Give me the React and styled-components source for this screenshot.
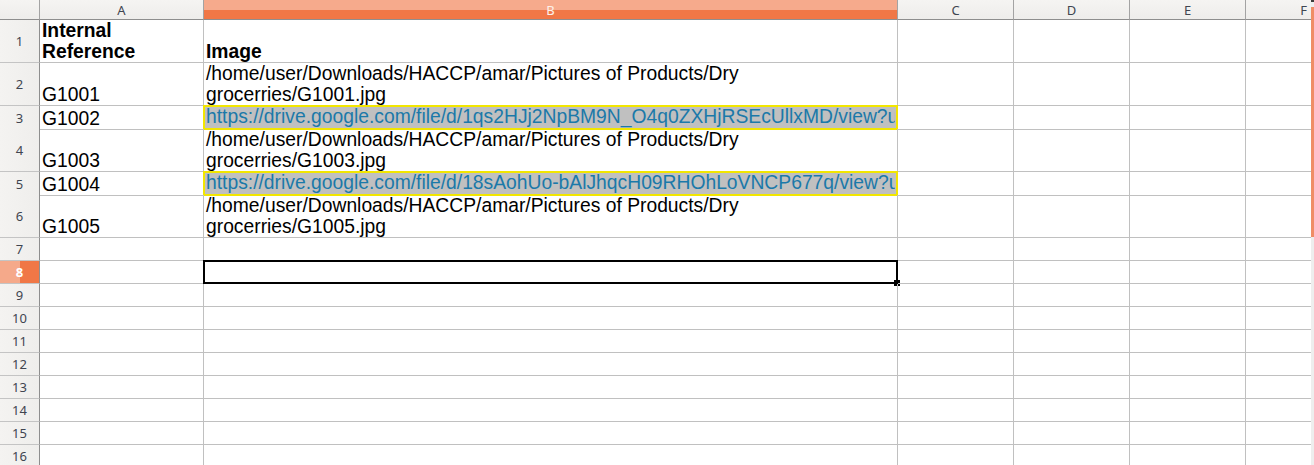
import React from "react";
import styled, { createGlobalStyle } from "styled-components";

const COLS = "40px 164px 694px 116px 116px 116px 116px";
const LETTERS = ["A", "B", "C", "D", "E", "F"];

const rows = [
  { h: 43, a: "Internal\nReference", b: "Image", bold: true },
  { h: 43, a: "G1001", b: "/home/user/Downloads/HACCP/amar/Pictures of Products/Dry\ngrocerries/G1001.jpg" },
  { h: 23, a: "G1002", b: "https://drive.google.com/file/d/1qs2HJj2NpBM9N_O4q0ZXHjRSEcUllxMD/view?usp=sharing", link: true },
  { h: 43, a: "G1003", b: "/home/user/Downloads/HACCP/amar/Pictures of Products/Dry\ngrocerries/G1003.jpg" },
  { h: 23, a: "G1004", b: "https://drive.google.com/file/d/18sAohUo-bAlJhqcH09RHOhLoVNCP677q/view?usp=sharing", link: true },
  { h: 43, a: "G1005", b: "/home/user/Downloads/HACCP/amar/Pictures of Products/Dry\ngrocerries/G1005.jpg" },
  { h: 23 },
  { h: 23, selected: true },
  ...Array.from({ length: 8 }, () => ({ h: 23 })),
];

const GlobalStyle = createGlobalStyle`
  html, body {
    margin: 0;
    padding: 0;
    background: #ffffff;
    overflow: hidden;
  }
`;

const Page = styled.div`
  display: flex;
  width: 1314px;
  height: 465px;
  overflow: hidden;
`;

const Sheet = styled.div`
  width: 1311px;
  overflow: hidden;
  font-family: "Liberation Sans", Arial, sans-serif;
`;

const Row = styled.div`
  display: grid;
  grid-template-columns: ${COLS};
  height: ${(p) => p.$h}px;
`;

const ColHead = styled.div`
  box-sizing: border-box;
  display: flex;
  align-items: center;
  justify-content: center;
  font-family: "Noto Sans", "DejaVu Sans", sans-serif;
  font-size: 13px;
  border-right: 1px solid #a3a3a3;
  border-bottom: 1px solid #8e8e8e;
  background: ${(p) =>
    p.$active
      ? "linear-gradient(#f6aa8c 0, #f6aa8c 10px, #f07746 10px, #f07746 100%)"
      : "linear-gradient(#f5f4f2, #eeedeb)"};
  color: ${(p) => (p.$active ? "#fdf1ea" : "#3f4550")};
`;

const RowHead = styled.div`
  box-sizing: border-box;
  display: flex;
  align-items: center;
  justify-content: center;
  font-family: "Noto Sans", "DejaVu Sans", sans-serif;
  font-size: 13px;
  border-right: 1px solid #8e8e8e;
  border-bottom: 1px solid #c4c4c4;
  background: ${(p) =>
    p.$active
      ? "linear-gradient(90deg, #f5a98a 0, #f5a98a 20px, #f07746 20px, #f07746 100%)"
      : "linear-gradient(90deg, #f4f3f1, #efeeec)"};
  color: ${(p) => (p.$active ? "#ffffff" : "#3f4550")};
  font-weight: ${(p) => (p.$active ? 700 : 400)};
`;

const Cell = styled.div`
  position: relative;
  box-sizing: border-box;
  display: flex;
  align-items: flex-end;
  padding: 0 2px ${(p) => (p.$link ? "2px" : "0")} 2px;
  border-right: 1px solid #c0c0c0;
  border-bottom: 1px solid #c0c0c0;
  font-size: 19.3px;
  line-height: 21px;
  white-space: pre;
  overflow: ${(p) => (p.$selected || p.$link ? "visible" : "hidden")};
  font-weight: ${(p) => (p.$bold ? 700 : 400)};
  color: ${(p) => (p.$link ? "#1b79a9" : "#000000")};
  background: ${(p) => (p.$link ? "#c0c0c0" : "transparent")};
`;

const Clip = styled.span`
  display: block;
  width: 100%;
  overflow-x: clip;
  overflow-y: visible;
`;

const LinkFrame = styled.div`
  position: absolute;
  top: -1px;
  left: -1px;
  right: -1px;
  bottom: -1px;
  border: 2px solid #f2e600;
  pointer-events: none;
`;

const Cursor = styled.div`
  position: absolute;
  top: -1px;
  left: -1px;
  right: -1px;
  bottom: -1px;
  border: 2px solid #000000;
  pointer-events: none;

  &::after {
    content: "";
    position: absolute;
    right: -4px;
    bottom: -4px;
    width: 6px;
    height: 6px;
    background: #000000;
  }
`;

const Scrollbar = styled.div`
  width: 3px;
  display: flex;
  flex-direction: column;
  background: #eeeeee;
`;

const ScrollCap = styled.div`
  height: 2px;
  background: #3c3c3c;
`;

const ScrollThumb = styled.div`
  margin-top: 5px;
  height: 230px;
  background: #ef8d66;
`;

export default function App() {
  return (
    <Page>
      <GlobalStyle />
      <Sheet>
        <Row $h={20}>
          <ColHead />
          {LETTERS.map((l) => (
            <ColHead key={l} $active={l === "B"}>
              {l}
            </ColHead>
          ))}
        </Row>
        {rows.map((r, i) => (
          <Row key={i} $h={r.h}>
            <RowHead $active={r.selected}>{i + 1}</RowHead>
            <Cell $bold={r.bold}>{r.a}</Cell>
            <Cell $bold={r.bold} $link={r.link} $selected={r.selected}>
              {r.link ? <Clip>{r.b}</Clip> : r.b}
              {r.link && <LinkFrame />}
              {r.selected && <Cursor />}
            </Cell>
            <Cell />
            <Cell />
            <Cell />
            <Cell />
          </Row>
        ))}
      </Sheet>
      <Scrollbar>
        <ScrollCap />
        <ScrollThumb />
      </Scrollbar>
    </Page>
  );
}
